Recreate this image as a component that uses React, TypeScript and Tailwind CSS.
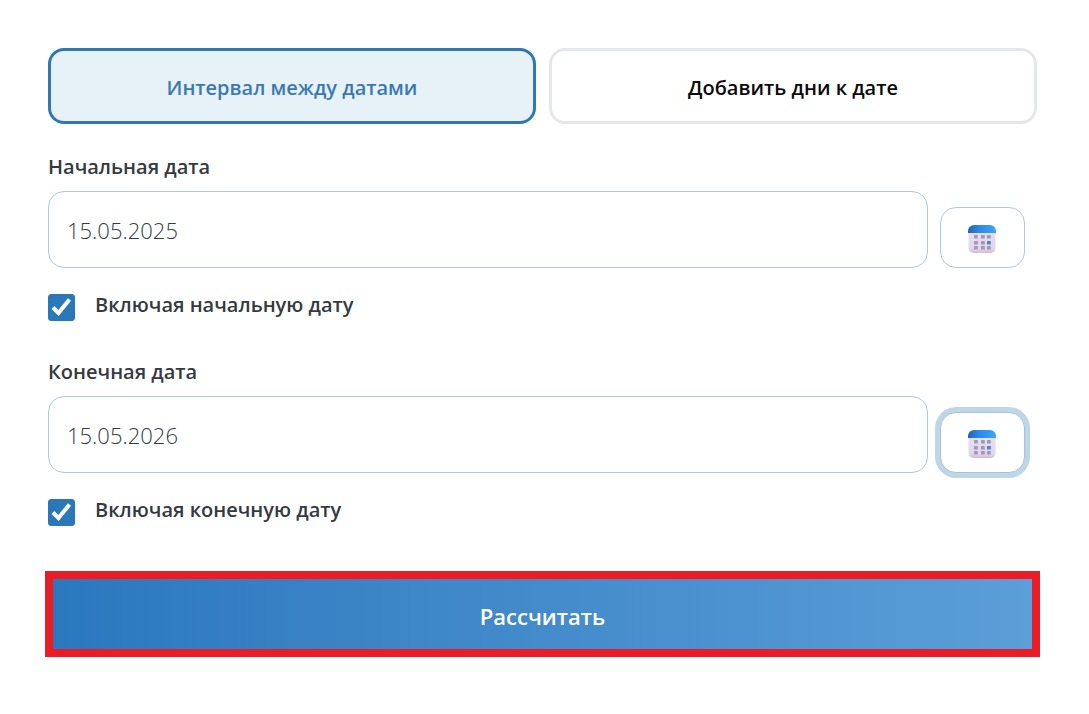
import { useState } from "react";

function CalendarIcon({ id }: { id: string }) {
  const columns = [6, 13, 19];
  const rows = [10, 16, 21];
  return (
    <svg width="28" height="28" viewBox="0 0 28 28" aria-hidden="true">
      <defs>
        <linearGradient id={`${id}-top`} x1="0" y1="0" x2="1" y2="0">
          <stop offset="0" stopColor="#2a60a8" />
          <stop offset="0.35" stopColor="#2b86e6" />
          <stop offset="1" stopColor="#3fa6f6" />
        </linearGradient>
        <linearGradient id={`${id}-body`} x1="0" y1="0" x2="0" y2="1">
          <stop offset="0" stopColor="#e6e2f0" />
          <stop offset="0.85" stopColor="#e2d6ec" />
          <stop offset="1" stopColor="#cdbbd6" />
        </linearGradient>
      </defs>
      <rect x="0.5" y="1" width="27" height="27" rx="5" fill={`url(#${id}-body)`} />
      <path d="M0 8V6a6 6 0 0 1 6-6h16a6 6 0 0 1 6 6v2Z" fill={`url(#${id}-top)`} />
      {rows.map((y, r) =>
        columns.map((x, c) => (
          <rect
            key={`${x}-${y}`}
            x={x}
            y={y}
            width="3.8"
            height="3.6"
            rx="0.6"
            fill={r === 1 && c === 2 ? "#4a86c8" : "#a397b4"}
          />
        )),
      )}
    </svg>
  );
}

type DateGroupProps = {
  id: string;
  label: string;
  includeLabel: string;
  initial: string;
  highlighted?: boolean;
};

function DateGroup({ id, label, includeLabel, initial, highlighted = false }: DateGroupProps) {
  const [value, setValue] = useState(initial);
  const [included, setIncluded] = useState(true);
  return (
    <div className="flex flex-col pr-3">
      <label htmlFor={id} className="text-[20px] leading-8 font-semibold text-[#343a40]">
        {label}
      </label>
      <div className="mt-2 flex items-end gap-3">
        <input
          id={id}
          type="text"
          value={value}
          onChange={(e) => setValue(e.target.value)}
          className="h-[77px] min-w-0 flex-1 rounded-2xl border border-[#b0c9da] bg-white px-[18px] text-[22px] font-light text-[#343a40] outline-none"
        />
        <button
          type="button"
          aria-label={`Календарь: ${label}`}
          className={
            highlighted
              ? "flex h-[61px] w-[85px] items-center justify-center rounded-2xl border border-[#a5c3d8] bg-white pt-0.5 pr-px ring-[5px] ring-[#bfd6e7]"
              : "flex h-[61px] w-[85px] items-center justify-center rounded-2xl border border-[#b0c9da] bg-white pt-0.5 pr-px"
          }
        >
          <CalendarIcon id={`${id}-icon`} />
        </button>
      </div>
      <div className="mt-5 flex items-center gap-5">
        <span className="mt-1.5 grid size-[27px]">
          <input
            id={`${id}-include`}
            type="checkbox"
            checked={included}
            onChange={(e) => setIncluded(e.target.checked)}
            className="peer col-start-1 row-start-1 size-[27px] appearance-none rounded-[3px] border border-[#2a78b8] bg-white checked:bg-[#2a78b8]"
          />
          <svg
            viewBox="0 0 27 27"
            aria-hidden="true"
            className="pointer-events-none col-start-1 row-start-1 hidden size-[27px] peer-checked:block"
          >
            <path d="M5 13.5 10.5 19 21.5 5.5" fill="none" stroke="#fff" strokeWidth="4" />
          </svg>
        </span>
        <label htmlFor={`${id}-include`} className="text-[20px] leading-8 font-semibold text-[#343a40]">
          {includeLabel}
        </label>
      </div>
    </div>
  );
}

const TABS = ["Интервал между датами", "Добавить дни к дате"];

export default function App() {
  const [active, setActive] = useState(0);
  return (
    <main className="min-h-screen bg-white pt-12 pr-[52px] pb-12 pl-12 font-['Open_Sans','Noto_Sans',sans-serif]">
      <div className="grid grid-cols-2 gap-[13px]">
        {TABS.map((tab, i) => (
          <button
            key={tab}
            type="button"
            aria-pressed={i === active}
            onClick={() => setActive(i)}
            className={
              i === active
                ? "h-[76px] rounded-2xl border-3 border-[#2f78b0] bg-[#e7f1f8] pt-1 text-[20px] font-semibold text-[#3a79b0]"
                : "h-[76px] rounded-2xl border-3 border-[#e5e7eb] bg-white pt-1 text-[20px] font-semibold text-[#0a0a0a]"
            }
          >
            {tab}
          </button>
        ))}
      </div>
      <form className="mt-[27px]" onSubmit={(e) => e.preventDefault()}>
        <div className="flex flex-col gap-[35px]">
          <DateGroup id="start" label="Начальная дата" includeLabel="Включая начальную дату" initial="15.05.2025" />
          <DateGroup
            id="end"
            label="Конечная дата"
            includeLabel="Включая конечную дату"
            initial="15.05.2026"
            highlighted
          />
        </div>
        <div className="-mx-[3px] mt-[45px] flex border-8 border-[#ea1c25]">
          <button
            type="submit"
            className="h-[70px] flex-1 bg-linear-to-r from-[#2a78be] to-[#5b9ed8] pt-1 text-[22px] font-semibold text-white"
          >
            Рассчитать
          </button>
        </div>
      </form>
    </main>
  );
}
